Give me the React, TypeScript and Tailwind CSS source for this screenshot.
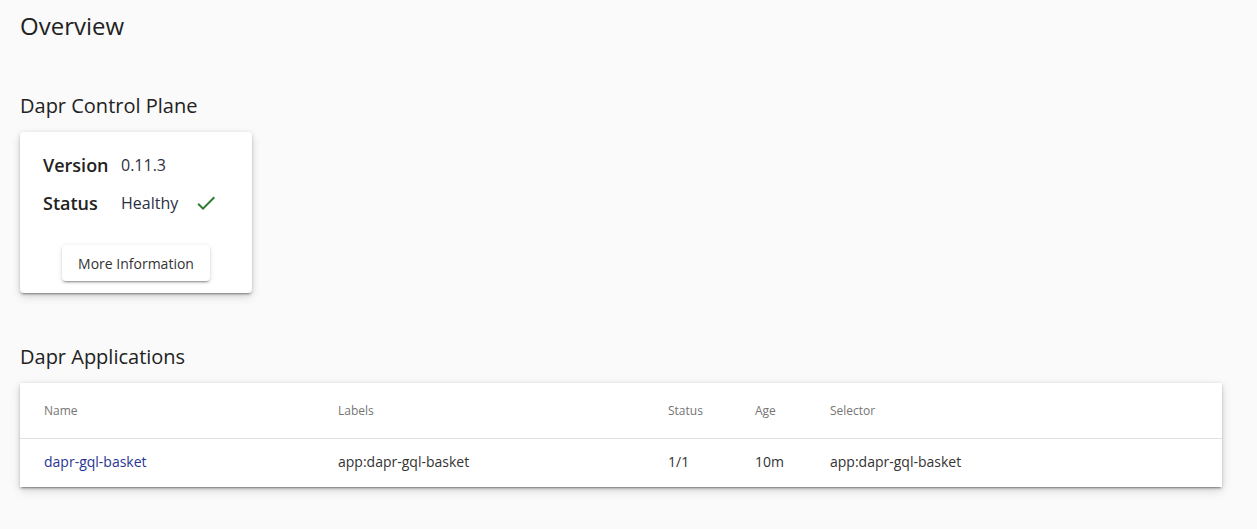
import React from 'react';

const apps = [
  { name: 'dapr-gql-basket', labels: 'app:dapr-gql-basket', status: '1/1', age: '10m', selector: 'app:dapr-gql-basket' },
];

const CheckIcon = () => (
  <svg viewBox="0 0 24 24" className="w-6 h-6" fill="#2e7d32">
    <path d="M9 16.17L4.83 12l-1.42 1.41L9 19 21 7l-1.41-1.41z" />
  </svg>
);

export default function App() {
  return (
    <div className="min-h-screen bg-[#fafafa] px-5 text-[rgba(0,0,0,0.87)]" style={{ fontFamily: '"Open Sans", "Liberation Sans", sans-serif' }}>
      <h1 className="pt-[10px] text-[24px] leading-8 font-normal text-[#222]">Overview</h1>

      <h2 className="mt-[50px] text-[20px] leading-7 font-normal text-[#222]">Dapr Control Plane</h2>
      <div className="mt-[12px] w-[232px] rounded bg-white px-[23px] pt-[19px] pb-3 shadow-[0_3px_1px_-2px_rgba(0,0,0,0.2),0_2px_2px_0_rgba(0,0,0,0.14),0_1px_5px_0_rgba(0,0,0,0.12),0_4px_10px_rgba(0,0,0,0.12)]">
        <div className="grid grid-cols-[78px_1fr] gap-y-[10px] items-center">
          <div className="text-[18px] leading-7 font-semibold text-[#222]">Version</div>
          <div className="text-[16px] leading-7 text-[#2d2f45]">0.11.3</div>
          <div className="text-[18px] leading-7 font-semibold text-[#222]">Status</div>
          <div className="flex items-center gap-[16px] text-[16px] leading-7 text-[#2d2f45]">
            <span>Healthy</span>
            <CheckIcon />
          </div>
        </div>
        <div className="mt-[28px] flex justify-center">
          <button className="h-9 w-[148px] rounded bg-white text-[14px] text-[#333] shadow-[0_3px_1px_-2px_rgba(0,0,0,0.2),0_2px_2px_0_rgba(0,0,0,0.14),0_1px_5px_0_rgba(0,0,0,0.12)]">
            More Information
          </button>
        </div>
      </div>

      <h2 className="mt-[50px] text-[20px] leading-7 font-normal text-[#222]">Dapr Applications</h2>
      <div className="mt-[12px] w-[1202px] bg-white shadow-[0_3px_1px_-2px_rgba(0,0,0,0.2),0_2px_2px_0_rgba(0,0,0,0.14),0_1px_5px_0_rgba(0,0,0,0.12),0_4px_10px_rgba(0,0,0,0.12)]">
        <div className="grid grid-cols-[294px_330px_87px_75px_1fr] h-[56px] items-center px-6 border-b border-[#e0e0e0] text-[12px] text-[#757575]">
          <div>Name</div>
          <div>Labels</div>
          <div>Status</div>
          <div>Age</div>
          <div>Selector</div>
        </div>
        {apps.map((a) => (
          <div key={a.name} className="grid grid-cols-[294px_330px_87px_75px_1fr] h-[48px] pb-1 items-center px-6 text-[14px] text-[#333]">
            <div className="text-[#283593]">{a.name}</div>
            <div>{a.labels}</div>
            <div>{a.status}</div>
            <div>{a.age}</div>
            <div>{a.selector}</div>
          </div>
        ))}
      </div>
    </div>
  );
}
